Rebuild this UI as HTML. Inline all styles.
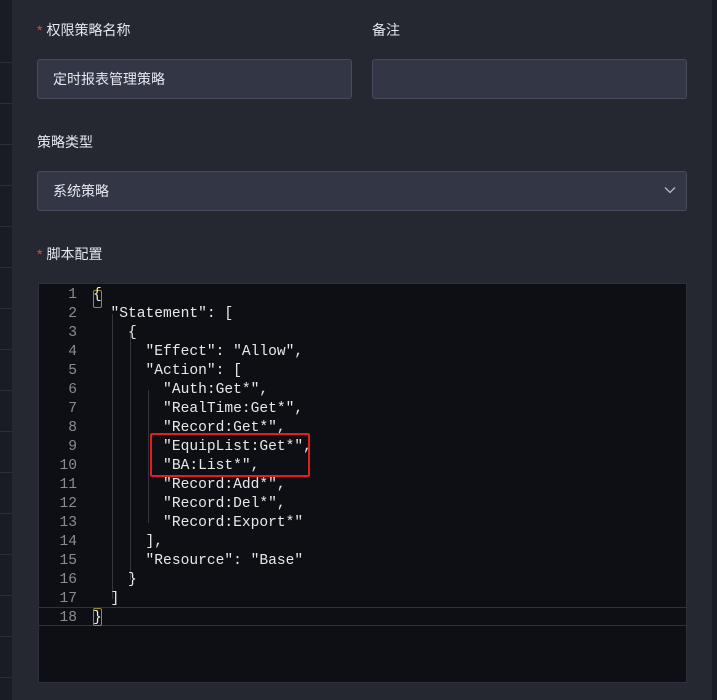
<!DOCTYPE html>
<html><head><meta charset="utf-8"><style>
*{margin:0;padding:0;box-sizing:border-box}
body{width:717px;height:700px;background:#15171e;position:relative;overflow:hidden;font-family:"Liberation Sans","Noto Sans CJK SC",sans-serif}
.strip{position:absolute;left:0;top:0;width:12px;height:700px;background:#1a1c24}
.strip i{position:absolute;left:0;width:12px;height:1px;background:#2c2f3a}
.rs{position:absolute;left:712px;top:0;width:5px;height:700px;background:#1a1c24}
.panel{position:absolute;left:12px;top:0;width:700px;height:700px;background:#252731}
.lbl{position:absolute;font-size:14px;color:#e6e8ee}
.lbl b{color:#e5483d;font-weight:normal;margin-right:4px}
.inp{position:absolute;background:#323645;border:1px solid #474b5b;border-radius:3px;color:#e6e8ee;font-size:14px;padding-left:15px;line-height:38px}
.ed{position:absolute;left:38px;top:283px;width:649px;height:400px;background:#0e0f14;border:1px solid #2e313b}
.code{position:absolute;left:0;top:2px;font-family:"Liberation Mono",monospace;font-size:14.6px;line-height:19px;color:#e8e8e8;white-space:pre}
.ln{position:absolute;left:0;width:38px;text-align:right;color:#8a8c93}
.cur{position:absolute;left:0;top:323px;width:647px;height:19px;border-top:1px solid #2f323b;border-bottom:1px solid #2f323b}
.g{position:absolute;width:1px;background:#33363f}
</style></head><body>
<div class="strip"><i style="top:62px"></i><i style="top:103px"></i><i style="top:144px"></i><i style="top:185px"></i><i style="top:226px"></i><i style="top:267px"></i><i style="top:308px"></i><i style="top:349px"></i><i style="top:390px"></i><i style="top:431px"></i><i style="top:472px"></i><i style="top:513px"></i><i style="top:554px"></i><i style="top:595px"></i><i style="top:636px"></i><i style="top:677px"></i></div>
<div class="rs"></div>
<div class="panel"></div>
<div class="lbl" style="left:37px;top:20px"><b>*</b>权限策略名称</div>
<div class="lbl" style="left:372px;top:20px">备注</div>
<div class="inp" style="left:37px;top:59px;width:315px;height:40px">定时报表管理策略</div>
<div class="inp" style="left:372px;top:59px;width:315px;height:40px"></div>
<div class="lbl" style="left:37px;top:132px">策略类型</div>
<div class="inp" style="left:37px;top:171px;width:650px;height:40px">系统策略
<svg style="position:absolute;right:10px;top:14px" width="12" height="8" viewBox="0 0 12 8"><path d="M1 1.5L6 6.5L11 1.5" stroke="#b8bcc8" stroke-width="1.3" fill="none"/></svg></div>
<div class="lbl" style="left:37px;top:244px"><b>*</b>脚本配置</div>
<div class="ed">
<div class="cur"></div>
<div class="g" style="left:73px;top:30px;height:285px"></div>
<div class="g" style="left:91px;top:49px;height:247px"></div>
<div class="g" style="left:109px;top:106px;height:133px"></div>
<div style="position:absolute;left:54px;top:6px;width:9px;height:18px;border:1px solid #a08a20;border-radius:2px"></div>
<div style="position:absolute;left:54px;top:324px;width:9px;height:18px;border:1px solid #a08a20;border-radius:2px"></div>
<div class="code"><div class="ln" style="top:0">1
2
3
4
5
6
7
8
9
10
11
12
13
14
15
16
17
18</div><div style="position:absolute;left:54px;top:0">{
  "Statement": [
    {
      "Effect": "Allow",
      "Action": [
        "Auth:Get*",
        "RealTime:Get*",
        "Record:Get*",
        "EquipList:Get*",
        "BA:List*",
        "Record:Add*",
        "Record:Del*",
        "Record:Export*"
      ],
      "Resource": "Base"
    }
  ]
}</div></div>
</div>
<div style="position:absolute;left:150px;top:433px;width:160px;height:44px;border:2px solid #e0201e;border-radius:2px"></div>
</body></html>
